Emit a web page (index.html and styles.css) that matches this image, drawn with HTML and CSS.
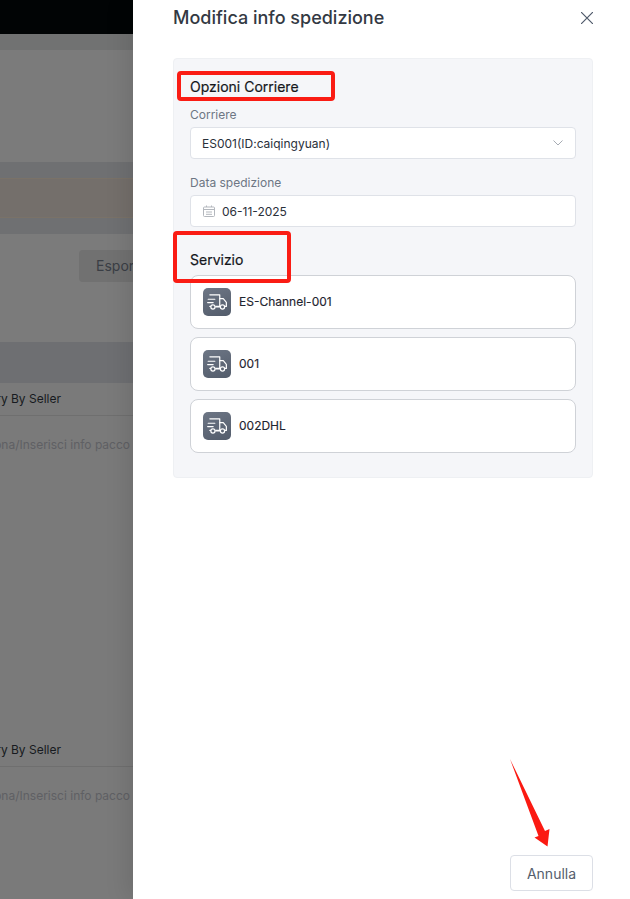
FILE: index.html
```html
<!DOCTYPE html>
<html lang="it">
<head>
<meta charset="utf-8">
<title>Modifica info spedizione</title>
<link rel="stylesheet" href="styles.css">
</head>
<body>
<div class="page">
  <div class="backdrop">
    <div class="band-black"></div>
    <div class="band-thin"></div>
    <div class="band-hero"></div>
    <div class="band-gap"></div>
    <div class="band-notice"></div>
    <div class="band-gap"></div>
    <div class="toolbar"><span class="export">Esporta</span></div>
    <div class="table-head"></div>
    <div class="row-title"><span>Delivery By Seller</span></div>
    <div class="row-action"><span>Seleziona/Inserisci info pacco</span></div>
    <div class="row-title"><span>Delivery By Seller</span></div>
    <div class="row-action"><span>Seleziona/Inserisci info pacco</span></div>
  </div>
  <aside class="drawer">
    <header class="drawer-head">
      <h1 class="drawer-title">Modifica info spedizione</h1>
      <svg class="close" width="12" height="12" viewBox="0 0 12 12"><path d="M0 0l12 12M12 0L0 12"/></svg>
    </header>
    <section class="panel">
      <h2 class="section-title">Opzioni Corriere</h2>
      <label class="field-label">Corriere</label>
      <div class="control control-select">
        <span>ES001(ID:caiqingyuan)</span>
        <svg class="chevron" width="10" height="6" viewBox="0 0 10 6"><path d="M.5.5L5 5 9.500.5"/></svg>
      </div>
      <label class="field-label field-label-gap">Data spedizione</label>
      <div class="control control-date">
        <svg class="calendar" width="12" height="12" viewBox="0 0 12 12"><path d="M1.500 2h9a1 1 0 0 1 1 1v7.500a1 1 0 0 1-1 1h-9a1 1 0 0 1-1-1V3a1 1 0 0 1 1-1zM.5 4.500h11M3.500.5V2M8.500.5V2M3 7h6M3 9.300h6"/></svg>
        <span>06-11-2025</span>
      </div>
      <h2 class="section-title section-title-gap">Servizio</h2>
      <ul class="services">
        <li class="service">
          <span class="service-icon"><svg width="22" height="22" viewBox="0 0 20 20"><use href="#truck"/></svg></span>
          <span class="service-name">ES-Channel-001</span>
        </li>
        <li class="service">
          <span class="service-icon"><svg width="22" height="22" viewBox="0 0 20 20"><use href="#truck"/></svg></span>
          <span class="service-name">001</span>
        </li>
        <li class="service">
          <span class="service-icon"><svg width="22" height="22" viewBox="0 0 20 20"><use href="#truck"/></svg></span>
          <span class="service-name">002DHL</span>
        </li>
      </ul>
    </section>
    <footer class="drawer-foot">
      <button class="btn" type="button">Annulla</button>
    </footer>
  </aside>
  <div class="mark mark-a"></div>
  <div class="mark mark-b"></div>
  <svg class="arrow" width="44" height="94" viewBox="0 0 44 94"><path d="M0 1L35 73 39.500 71 37.500 88.500 24.500 79.500 28.500 78Z"/></svg>
</div>
<svg class="defs" width="0" height="0">
  <defs>
    <g id="truck" fill="none" stroke="#fff" stroke-width="1.100" stroke-linecap="round" stroke-linejoin="round">
      <path d="M3.500 3.500h9v10.500H9"/>
      <path d="M12.500 7h3.200l2.800 3.300V14h-1.200"/>
      <path d="M2 7.500h6M1.500 10.500h5M3.500 14H4"/>
      <circle cx="6.300" cy="14.500" r="1.900"/>
      <circle cx="15" cy="14.500" r="1.900"/>
      <path d="M9 14.500h3.500"/>
    </g>
  </defs>
</svg>
</body>
</html>
```
FILE: styles.css
```css
* { box-sizing: border-box; }
html, body { margin: 0; padding: 0; }
body { font-family: Inter, "Liberation Sans", sans-serif; background: #fff; color: #1f2530; }
.page { position: relative; display: flex; width: 630px; height: 899px; overflow: hidden; }
.defs { position: absolute; }

.backdrop { flex: 0 0 133px; display: flex; flex-direction: column; background: #7a7a7a; overflow: hidden; font-size: 12px; white-space: nowrap; }
.band-black { height: 34px; flex: none; background: #010405; }
.band-thin { height: 16px; flex: none; background: #717272; }
.band-hero { height: 112px; flex: none; background: #7b7b7b; }
.band-gap { height: 16px; flex: none; background: #6f7072; }
.band-notice { height: 40px; flex: none; background: #746f6b; border-top: 1px solid #7a7268; border-bottom: 1px solid #7a7268; }
.toolbar { height: 108px; flex: none; padding: 16px 0 0 79px; background: #7b7b7b; }
.export { display: block; width: 90px; height: 32px; padding-left: 17px; border-radius: 4px; background: #717171; color: #3a3e45; font-size: 14px; line-height: 32px; }
.table-head { height: 41px; flex: none; background: #6e6f72; }
.row-title { height: 33px; flex: none; display: flex; justify-content: flex-end; padding: 8px 72px 0 0; border-bottom: 1px solid #6f6f6f; color: #171a20; }
.row-action { height: 318px; flex: none; display: flex; justify-content: flex-end; padding: 21px 3px 0 0; color: #5f6064; }
.row-action:last-child { height: auto; }
.row-title, .row-action { background: #7a7a7a; }

.drawer { position: relative; flex: 1; display: flex; flex-direction: column; padding: 0 37px 8px 40px; background: #fff; box-shadow: -6px 0 22px rgba(0, 0, 0, .1); }
.drawer-head { display: flex; align-items: center; justify-content: space-between; height: 58px; padding-bottom: 22px; }
.drawer-title { margin: 0; font-size: 18px; font-weight: 500; line-height: 36px; color: #333943; }
.close { fill: none; stroke: #4f5a6a; stroke-width: 1.200; }
.panel { height: 420px; padding: 17px 16px 0; background: #f5f6f9; border: 1px solid #eef0f3; border-radius: 4px; }
.section-title { margin: 0; font-size: 14px; font-weight: 400; line-height: 22px; color: #14171c; -webkit-text-stroke: .2px #14171c; }
.section-title-gap { margin-top: 22px; }
.field-label { display: block; margin-top: 7px; font-size: 12px; line-height: 20px; color: #6d7684; }
.field-label-gap { margin-top: 14px; }
.control { display: flex; align-items: center; height: 32px; margin-top: 2px; padding: 0 11px; background: #fff; border: 1px solid #dfe2e8; border-radius: 4px; font-size: 12px; color: #2a303a; }
.control-select { justify-content: space-between; }
.chevron { fill: none; stroke: #a6abb3; stroke-width: 1; margin-right: 1px; }
.control-date { gap: 7px; padding-left: 12px; }
.calendar { fill: none; stroke: #b3b7bd; stroke-width: 1; }
.services { display: flex; flex-direction: column; gap: 8px; margin: 4px 0 0; padding: 0; list-style: none; }
.service { display: flex; align-items: center; gap: 8px; height: 54px; padding: 0 12px; background: #fff; border: 1px solid #cfd2d7; border-radius: 8px; font-size: 12px; color: #1f2530; }
.service-name { padding-bottom: 2px; -webkit-text-stroke: .15px #1f2530; }
.service-icon { display: flex; align-items: center; justify-content: center; width: 28px; height: 28px; border-radius: 5px; background: linear-gradient(160deg, #6d7685, #535c6b); }
.drawer-foot { display: flex; justify-content: flex-end; margin-top: auto; }
.btn { width: 83px; height: 36px; padding: 0; background: #fff; border: 1px solid #dcdfe6; border-radius: 4px; font: 14px Inter, "Liberation Sans", sans-serif; color: #555e6d; }

.mark { position: absolute; border: 4px solid #fa1c14; border-radius: 4px; }
.mark-a { left: 177px; top: 71px; width: 158px; height: 30px; }
.mark-b { left: 173px; top: 231px; width: 118px; height: 52px; }
.arrow { position: absolute; left: 510px; top: 758px; fill: #fb1a12; }
```
